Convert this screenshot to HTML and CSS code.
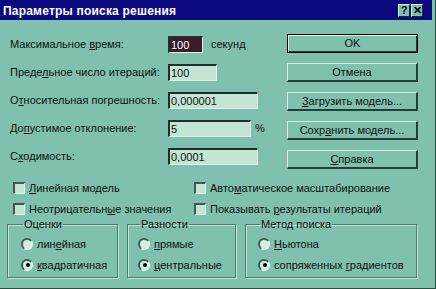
FILE: index.html
```html
<!DOCTYPE html>
<html lang="ru">
<head>
    <meta charset="UTF-8">
    <title>Параметры поиска решения</title>
    <link rel="stylesheet" href="styles.css">
</head>
<body>
    <div class="window">
        <div class="titlebar">
            <span class="title">Параметры поиска решения</span>
            <div class="caption-btns">
                <span class="cbtn">?</span>
                <span class="cbtn">&#x2715;</span>
            </div>
        </div>
        <div class="content">
            <div class="top">
                <div class="fields">
                    <div class="field">
                        <span class="label">Максимальное <u>в</u>ремя:</span>
                        <span class="input selected w35">100</span>
                        <span class="unit">секунд</span>
                    </div>
                    <div class="field">
                        <span class="label">Преде<u>л</u>ьное число итераций:</span>
                        <span class="input w49">100</span>
                    </div>
                    <div class="field">
                        <span class="label">О<u>т</u>носительная погрешность:</span>
                        <span class="input w90">0,000001</span>
                    </div>
                    <div class="field">
                        <span class="label">До<u>п</u>устимое отклонение:</span>
                        <span class="input w83">5</span>
                        <span class="unit pct">%</span>
                    </div>
                    <div class="field">
                        <span class="label">С<u>х</u>одимость:</span>
                        <span class="input w90">0,0001</span>
                    </div>
                </div>
                <div class="buttons">
                    <span class="button default">OK</span>
                    <span class="button">Отмена</span>
                    <span class="button"><u>З</u>агрузить модель...</span>
                    <span class="button">Сохр<u>а</u>нить модель...</span>
                    <span class="button"><u>С</u>правка</span>
                </div>
            </div>

            <div class="checks">
                <div class="check"><span class="box"></span><span><u>Л</u>инейная модель</span></div>
                <div class="check"><span class="box"></span><span>Авто<u>м</u>атическое масштабирование</span></div>
                <div class="check"><span class="box"></span><span>Неотрицательн<u>ы</u>е значения</span></div>
                <div class="check"><span class="box"></span><span>Показывать <u>р</u>езультаты итераций</span></div>
            </div>

            <div class="groups">
                <fieldset class="group g1">
                    <legend>Оценки</legend>
                    <div class="radio"><span class="dot"></span><span>лин<u>е</u>йная</span></div>
                    <div class="radio"><span class="dot on"></span><span><u>к</u>вадратичная</span></div>
                </fieldset>
                <fieldset class="group g2">
                    <legend>Разности</legend>
                    <div class="radio"><span class="dot"></span><span><u>п</u>рямые</span></div>
                    <div class="radio"><span class="dot on"></span><span><u>ц</u>ентральные</span></div>
                </fieldset>
                <fieldset class="group g3">
                    <legend>Метод поиска</legend>
                    <div class="radio"><span class="dot"></span><span><u>Н</u>ьютона</span></div>
                    <div class="radio"><span class="dot on"></span><span>сопряженных <u>г</u>радиентов</span></div>
                </fieldset>
            </div>
        </div>
    </div>
</body>
</html>
```

FILE: styles.css
```css
body {
    margin: 0;
    background-color: #80c0ae;
    font-family: "Liberation Sans", Arial, sans-serif;
    font-size: 11px;
    color: #101010;
}
u {
    text-underline-offset: 1px;
}
.window {
    width: 436px;
    height: 289px;
    box-sizing: border-box;
    background-color: #80c0ae;
    border-right: 1px solid #2c4c44;
    border-bottom: 1px solid #2c4c44;
    padding-right: 3px;
}
.titlebar {
    height: 20px;
    background-color: #0a0a7e;
    color: white;
    display: flex;
    align-items: center;
    justify-content: space-between;
    padding: 1px 0 0 3px;
    box-sizing: border-box;
}
.title {
    font-weight: bold;
    font-size: 12px;
    letter-spacing: 0.2px;
}
.caption-btns {
    display: flex;
    margin-right: 9px;
}
.cbtn {
    width: 12px;
    height: 13px;
    box-sizing: border-box;
    background-color: #80c0ae;
    color: black;
    font-weight: bold;
    font-size: 11px;
    line-height: 11px;
    text-align: center;
    border-top: 1px solid #d4eee4;
    border-left: 1px solid #d4eee4;
    border-right: 1px solid #1a2a26;
    border-bottom: 1px solid #1a2a26;
    margin-left: 1px;
}
.content {
    padding-top: 10px;
}
.top {
    display: flex;
}
.fields {
    width: 277px;
    padding-left: 10px;
    box-sizing: border-box;
}
.field {
    height: 28px;
    display: flex;
    align-items: center;
}
.label {
    width: 158px;
}
.input {
    height: 17px;
    box-sizing: border-box;
    background-color: #c4e4d6;
    border-top: 2px solid #1e302c;
    border-left: 2px solid #1e302c;
    border-right: 1px solid #e0f4ec;
    border-bottom: 1px solid #e0f4ec;
    padding-left: 1px;
    line-height: 14px;
}
.input.selected {
    background-color: #3c1a2c;
    color: white;
}
.w35 { width: 35px; }
.w49 { width: 49px; }
.w90 { width: 90px; }
.w83 { width: 83px; }
.unit {
    margin-left: 8px;
}
.unit.pct {
    margin-left: 4px;
}
.buttons {
    display: flex;
    flex-direction: column;
    gap: 10px;
    padding-top: 4px;
    margin-left: 10px;
}
.button {
    width: 131px;
    height: 19px;
    box-sizing: border-box;
    text-align: center;
    line-height: 16px;
    background-color: #80c0ae;
    border-top: 1px solid #d4eee4;
    border-left: 1px solid #d4eee4;
    border-right: 2px solid #263c36;
    border-bottom: 2px solid #263c36;
}
.button.default {
    border: 1px solid black;
    box-shadow: inset 1px 1px 0 #d4eee4, inset -1px -1px 0 #263c36;
}
.checks {
    display: grid;
    grid-template-columns: 181px auto;
    grid-auto-rows: 21px;
    margin-top: 7px;
    padding-left: 13px;
}
.check {
    display: flex;
    align-items: center;
}
.box {
    width: 12px;
    height: 12px;
    box-sizing: border-box;
    background-color: #c4e4d6;
    border-top: 2px solid #3c5a52;
    border-left: 2px solid #3c5a52;
    border-right: 1px solid #e0f4ec;
    border-bottom: 1px solid #e0f4ec;
    margin-right: 4px;
}
.groups {
    display: flex;
    gap: 9px;
    padding-left: 7px;
    margin-top: -1px;
}
.group {
    margin: 0;
    height: 60px;
    box-sizing: border-box;
    padding: 2px 0 0 12px;
    border: 1px solid #4c7c6e;
    box-shadow: 1px 1px 0 #c4e4d8, inset 1px 1px 0 #c4e4d8;
}
.group legend {
    padding: 0 1px;
    margin-left: 2px;
    line-height: 13px;
}
.g1 { width: 111px; padding-left: 13px; }
.g2 { width: 109px; padding-left: 10px; }
.g3 { width: 172px; }
.radio {
    height: 21px;
    display: flex;
    align-items: center;
}
.dot {
    width: 12px;
    height: 12px;
    box-sizing: border-box;
    border-radius: 50%;
    background-color: #d4ece2;
    border-top: 2px solid #3c5a52;
    border-left: 2px solid #3c5a52;
    border-right: 1px solid #f0fbf6;
    border-bottom: 1px solid #f0fbf6;
    margin-right: 4px;
    display: flex;
    align-items: center;
    justify-content: center;
}
.dot.on::after {
    content: "";
    width: 4px;
    height: 4px;
    border-radius: 50%;
    background-color: black;
}
```
